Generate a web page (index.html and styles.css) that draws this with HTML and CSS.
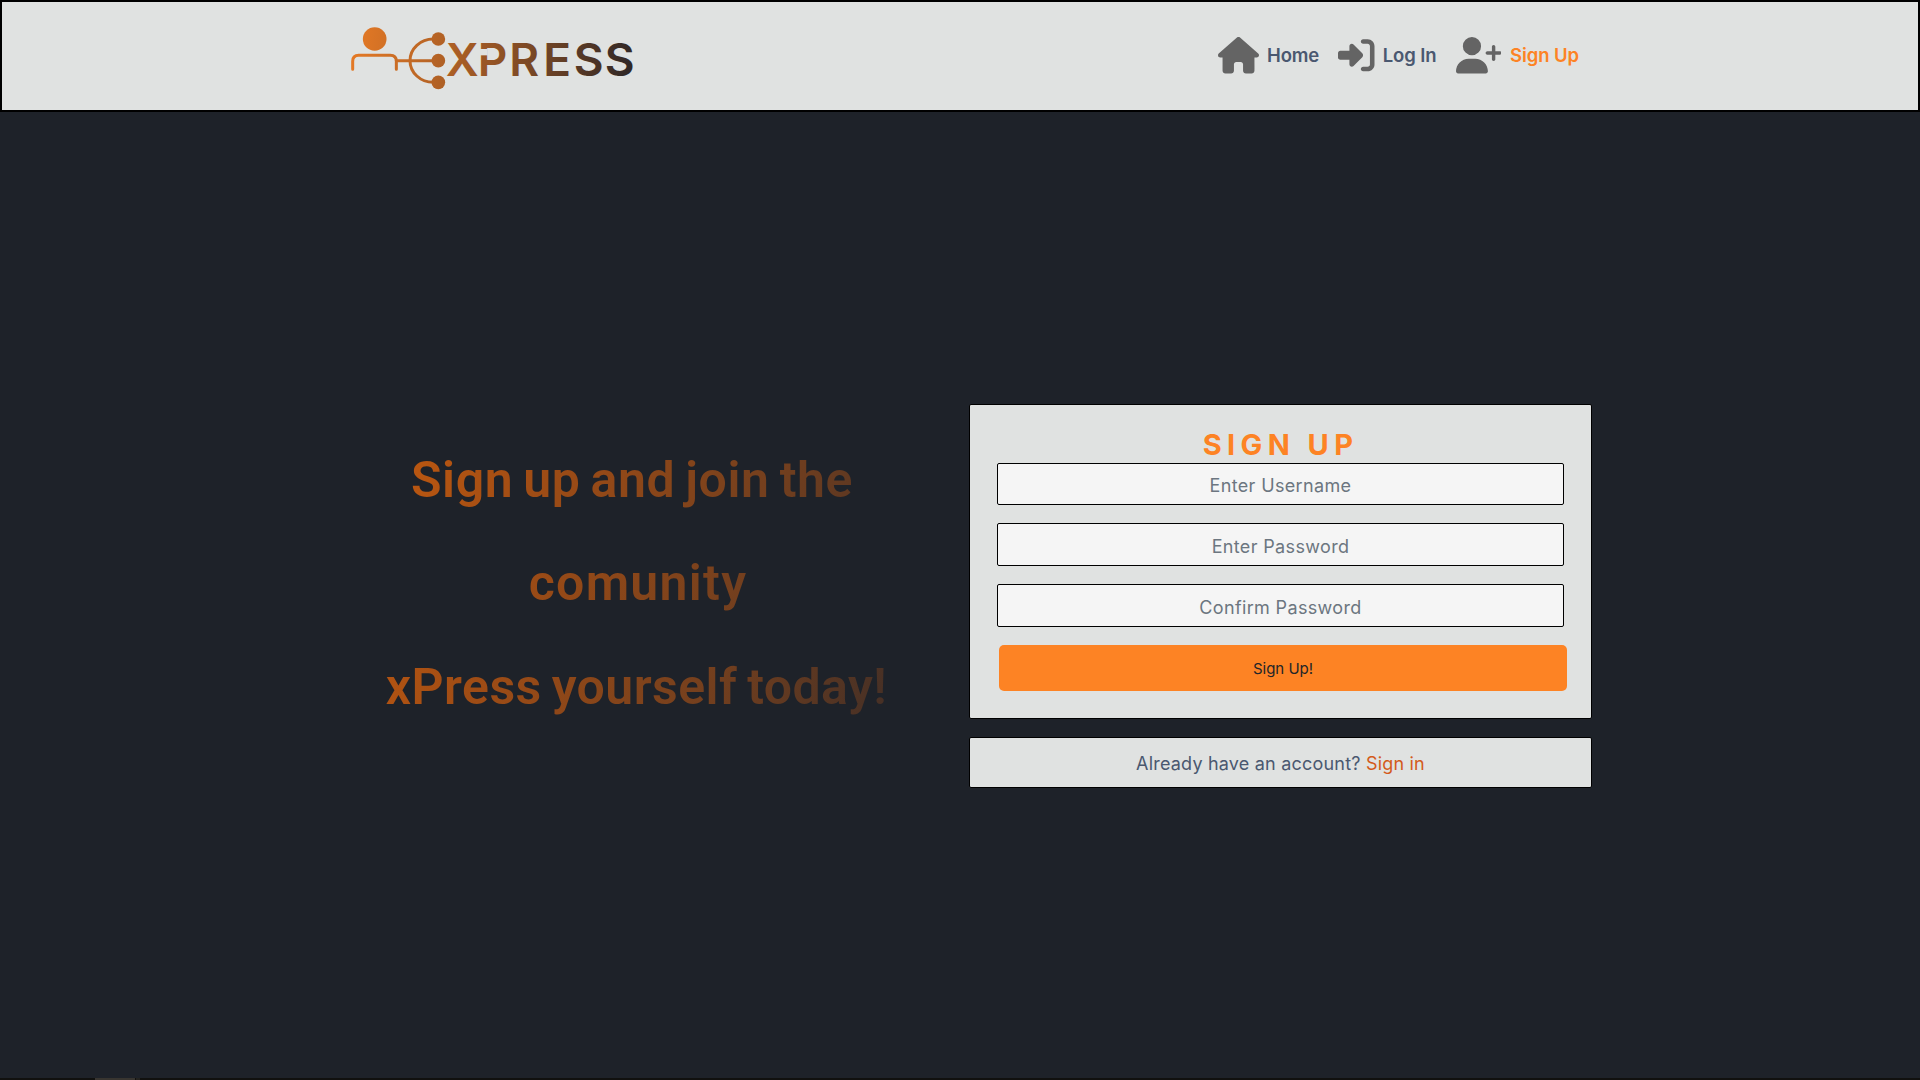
FILE: index.html
```html
<!DOCTYPE html>
<html lang="en">
<head>
<meta charset="utf-8">
<title>xPress - Sign Up</title>
<link rel="stylesheet" href="styles.css">
</head>
<body>
<header class="navbar">
  <a class="brand" aria-label="xPress">
    <svg class="logo" viewBox="30 60 870 220">
      <defs>
        <linearGradient id="brand" gradientUnits="userSpaceOnUse" x1="35" y1="100" x2="885" y2="220">
          <stop offset="0" stop-color="#e67a25"/>
          <stop offset=".5" stop-color="#955425"/>
          <stop offset="1" stop-color="#2d2626"/>
        </linearGradient>
      </defs>
      <g fill="none" stroke="url(#brand)" stroke-width="9" stroke-linecap="round">
        <path d="M38 208V184Q38 166 56 166H151Q169 166 169 184V208"/>
        <path d="M169 182L295 182.5M295 117H280A70 65 0 0 0 280 247H295"/>
      </g>
      <g fill="url(#brand)">
        <circle cx="104" cy="117" r="35.500"/>
        <circle cx="295" cy="117" r="20.500"/>
        <circle cx="295" cy="182" r="20.500"/>
        <circle cx="295" cy="247" r="20.500"/>
        <text class="logo-text" x="317 413 508 610 701 794" y="228">XPRESS</text>
      </g>
      <path class="logo-cut" d="M414 147H443V166H414z"/>
    </svg>
  </a>
  <nav class="links">
    <a class="link"><svg class="icon home" viewBox="0 0 576 512"><path d="M575.8 255.500c0 18-15 32.100-32 32.100h-32l.7 160.200c0 2.700-.2 5.400-.5 8.100V472c0 22.100-17.900 40-40 40H392c-22.100 0-40-17.900-40-40V384c0-17.700-14.300-32-32-32H256c-17.700 0-32 14.300-32 32v88c0 22.100-17.900 40-40 40H104c-22.100 0-40-17.900-40-40V287.600H32c-18 0-32-14-32-32.100c0-9 3-17 10-24L266.400 8c7-7 15-8 22-8s15 2 21 7L564.800 231.500c8 7 12 15 11 24z"/></svg><span>Home</span></a>
    <a class="link"><svg class="icon login" viewBox="0 0 512 512"><path d="M217.9 105.900L340.700 228.700c7.200 7.200 11.300 17.100 11.300 27.300s-4.100 20.100-11.300 27.300L217.900 406.100c-6.400 6.400-15 9.900-24 9.900c-18.700 0-33.900-15.200-33.900-33.900V320H32c-17.700 0-32-14.300-32-32v-64c0-17.700 14.300-32 32-32h128v-62.100c0-18.700 15.200-33.900 33.900-33.900c9 0 17.600 3.600 24 9.900zM352 416h64c17.700 0 32-14.300 32-32V128c0-17.700-14.300-32-32-32h-64c-17.700 0-32-14.300-32-32s14.300-32 32-32h64c53 0 96 43 96 96v256c0 53-43 96-96 96h-64c-17.700 0-32-14.300-32-32s14.300-32 32-32z"/></svg><span>Log In</span></a>
    <a class="link active"><svg class="icon signup" viewBox="0 0 640 512"><path d="M96 128a128 128 0 1 1 256 0A128 128 0 1 1 96 128zM0 482.300C0 383.800 79.800 304 178.300 304h91.400C368.200 304 448 383.800 448 482.300c0 16.400-13.300 29.700-29.700 29.700H29.700C13.300 512 0 498.700 0 482.300zM504 312V248H440c-13.300 0-24-10.700-24-24s10.700-24 24-24h64V136c0-13.300 10.700-24 24-24s24 10.700 24 24v64h64c13.300 0 24 10.700 24 24s-10.700 24-24 24H552v64c0 13.300-10.700 24-24 24s-24-10.700-24-24z"/></svg><span>Sign Up</span></a>
  </nav>
</header>
<main class="main">
  <h1 class="hero"><span class="line join">Sign up and join the</span><span class="line community">comunity</span><span class="line today">xPress yourself today!</span></h1>
  <section class="forms">
    <form class="card signup-card">
      <h2 class="title">SIGN UP</h2>
      <input class="field first" type="text" placeholder="Enter Username">
      <input class="field" type="password" placeholder="Enter Password">
      <input class="field" type="password" placeholder="Confirm Password">
      <button class="submit" type="button">Sign Up!</button>
    </form>
    <div class="card signin-card">Already have an account?&nbsp;<a class="signin">Sign in</a></div>
  </section>
</main>
<footer class="edge"><i class="tab"></i><i class="tab-end"></i></footer>
</body>
</html>
```
FILE: styles.css
```css
* { box-sizing: border-box; }
body {
  margin: 0;
  height: 1080px;
  overflow: hidden;
  display: flex;
  flex-direction: column;
  background: #1e2229;
  font-family: Inter, sans-serif;
}
.navbar {
  height: 112px;
  flex: none;
  display: flex;
  justify-content: space-between;
  padding: 18px 339px 0 348px;
  border: 2px solid #000;
  background: #e0e2e1;
}
.logo { display: block; width: 290px; height: 73.33px; }
.logo-text { font: 600 137.5px Inter, sans-serif; }
.logo-cut { fill: #e0e2e1; }
.links { display: flex; align-items: flex-start; gap: 19px; padding-top: 17px; }
.link {
  display: flex;
  align-items: center;
  height: 37px;
  gap: 8px;
  color: #4a5870;
  font: 600 18.5px Inter, sans-serif;
  letter-spacing: -.1px;
}
.link span { position: relative; top: -1px; }
.active { color: #fd8324; gap: 9px; }
.icon { height: 36.5px; fill: #646464; }
.home { width: 41px; }
.login { width: 36.5px; }
.signup { width: 45.6px; }
.main { flex: 1; display: flex; align-items: flex-start; padding-left: 328px; }
.hero {
  width: 617px;
  margin: 317px 24px 0 0;
  display: flex;
  flex-direction: column;
  align-items: center;
  font: 600 50px/103.3px Roboto, sans-serif;
  color: transparent;
  background: linear-gradient(107deg, #cc5e0e 0%, #a44e14 28%, #733f1e 65%, #352a28 100%);
  -webkit-background-clip: text;
  background-clip: text;
}
.line { white-space: nowrap; word-spacing: -3px; }
.join { letter-spacing: .6px; margin-right: 9px; }
.community { letter-spacing: 1.3px; margin-left: 3px; }
.today { letter-spacing: .45px; }
.forms { display: flex; flex-direction: column; gap: 18px; width: 623px; padding-top: 292px; }
.card { background: #e0e2e1; border: 1px solid #000; border-radius: 2px; }
.signup-card { height: 315px; padding: 22px 27px 0; display: flex; flex-direction: column; }
.title {
  margin: 0;
  height: 36px;
  flex: none;
  color: #fd8324;
  font: 650 29px/36px Inter, sans-serif;
  letter-spacing: 5.4px;
  text-align: center;
}
.field {
  width: 567px;
  height: 43px;
  flex: none;
  margin: 0 0 18px;
  padding: 3px 8px 0;
  background: #f5f5f5;
  border: 1px solid #000;
  border-radius: 2px;
  font: 18px Inter, sans-serif;
  letter-spacing: .35px;
  text-align: center;
}
.first { height: 42px; }
.field::placeholder { color: #6c7680; opacity: 1; }
.submit {
  width: 568px;
  height: 46px;
  margin: 0 0 0 2px;
  padding: 0;
  border: 0;
  border-radius: 5px;
  background: #fd8324;
  color: #212529;
  font: 15px Inter, sans-serif;
}
.signin-card {
  height: 51px;
  display: flex;
  align-items: center;
  justify-content: center;
  padding-top: 2px;
  color: #4a5870;
  font-size: 18px;
  letter-spacing: .2px;
}
.signin { color: #d35a1a; }
.edge { flex: none; height: 2px; display: flex; gap: 1px; padding-left: 95px; background: #11110f; }
.tab { width: 40px; background: #383530; }
.tab-end { width: 4px; background: #24231f; }
```
